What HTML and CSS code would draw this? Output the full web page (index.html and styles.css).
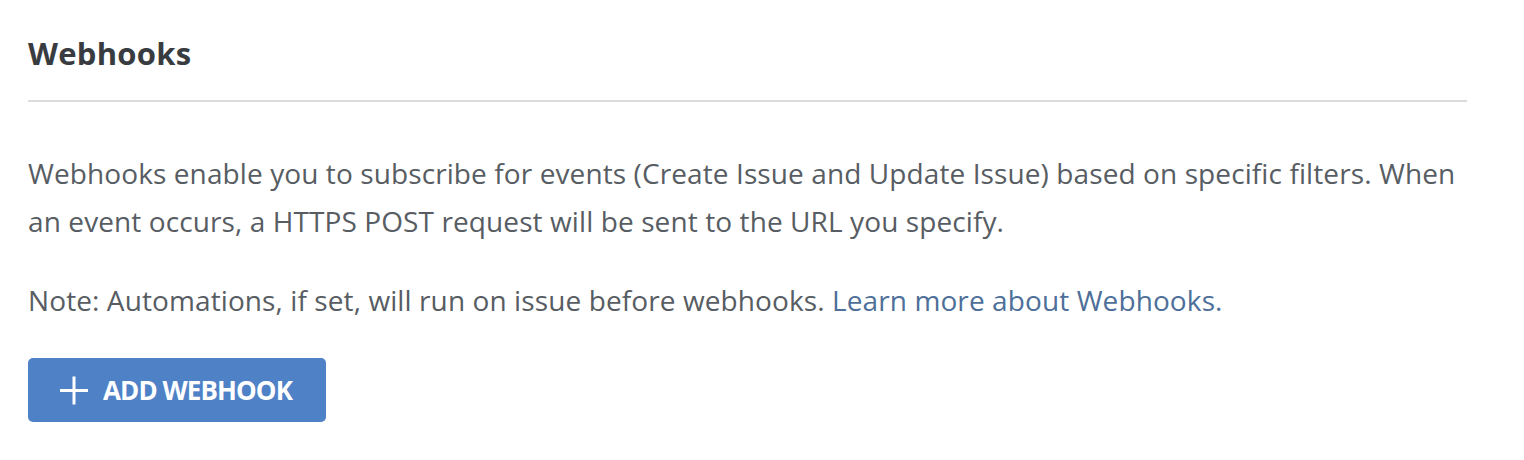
FILE: index.html
```html
<!DOCTYPE html>
<html>
<head>
<meta charset="utf-8">
<link rel="stylesheet" href="styles.css">
</head>
<body>
<section class="panel">
  <h2 class="title">Webhooks</h2>
  <div class="divider"></div>
  <p class="desc">Webhooks enable you to subscribe for events (Create Issue and Update Issue) based on specific filters. When an event occurs, a HTTPS POST request will be sent to the URL you specify.</p>
  <p class="note">Note: Automations, if set, will run on issue before webhooks. <a class="link" href="#">Learn more about Webhooks.</a></p>
  <button class="btn" type="button">
    <svg class="plus" width="28" height="29" viewBox="0 0 28 29"><path d="M14 0.5V28.5M0 14.5H28" stroke="#fff" stroke-width="3" fill="none"/></svg>
    <span>ADD WEBHOOK</span>
  </button>
</section>
</body>
</html>
```

FILE: styles.css
```css
html, body {
  margin: 0;
  padding: 0;
  background: #ffffff;
}
body {
  font-family: "Open Sans", "Noto Sans", sans-serif;
}
.panel {
  width: 1439px;
  padding: 0 28px;
}
.title {
  margin: 0;
  padding-top: 33px;
  font-size: 31px;
  line-height: 40px;
  font-weight: 700;
  color: #383c40;
  letter-spacing: 0.25px;
}
.divider {
  margin-top: 27px;
  height: 2px;
  background: #dcdcdc;
}
.desc, .note {
  margin: 0;
  font-size: 28px;
  line-height: 48px;
  color: #575d63;
  letter-spacing: 0.1px;
}
.desc {
  margin-top: 47px;
}
.note {
  margin-top: 31px;
}
.link {
  color: #4d6f99;
  text-decoration: none;
}
.btn {
  margin-top: 34px;
  display: flex;
  align-items: center;
  gap: 15px;
  width: 298px;
  height: 64px;
  padding: 0 0 0 32px;
  border: none;
  border-radius: 5px;
  background: #4f81c7;
  color: #fff;
  font-family: "Open Sans", "Noto Sans", sans-serif;
  font-size: 26px;
  font-weight: 700;
  letter-spacing: -0.9px;
}
.plus {
  display: block;
}
```
